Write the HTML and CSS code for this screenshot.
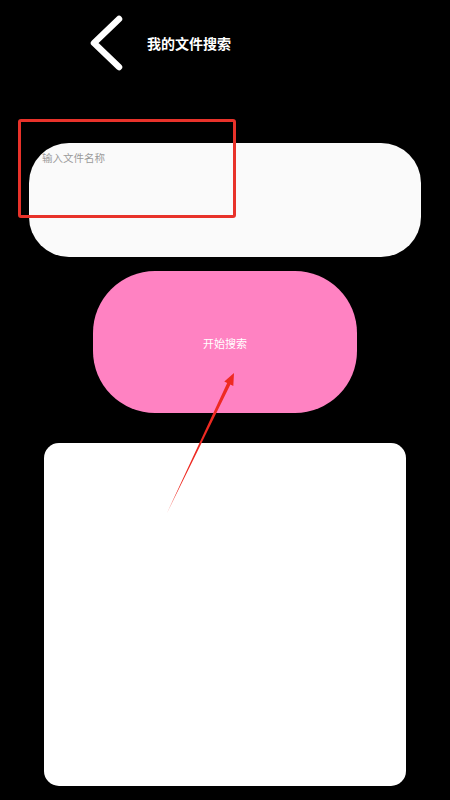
FILE: index.html
```html
<!DOCTYPE html>
<html lang="zh">
<head>
<meta charset="utf-8">
<title>我的文件搜索</title>
<link rel="stylesheet" href="styles.css">
</head>
<body>
<div class="page">
  <header class="header">
    <svg class="back" width="36" height="56" viewBox="0 0 36 56">
      <polyline points="31,4 6,28 31,52" fill="none" stroke="#fff" stroke-width="6.5" stroke-linecap="round" stroke-linejoin="round"/>
    </svg>
    <h1 class="title">我的文件搜索</h1>
  </header>
  <div class="input-box">
    <span class="placeholder">输入文件名称</span>
  </div>
  <button class="search-btn">开始搜索</button>
  <div class="result-card"></div>

  <div class="mark-box"></div>
  <svg class="mark-arrow" width="450" height="800" viewBox="0 0 450 800">
    <polygon points="167,513 227.2,383 224.3,381.6 234,373 233.3,386 230.4,384.6" fill="#ee2a22"/>
  </svg>
</div>
</body>
</html>
```

FILE: styles.css
```css
html, body {
  margin: 0;
  padding: 0;
  background: #000;
}
body {
  font-family: "Noto Sans CJK SC", "Noto Sans", sans-serif;
}
.page {
  position: relative;
  width: 450px;
  height: 800px;
  display: flex;
  flex-direction: column;
  overflow: hidden;
}
.header {
  display: flex;
  align-items: center;
  height: 86px;
  padding-left: 88px;
  box-sizing: border-box;
}
.back {
  display: block;
  flex: none;
}
.title {
  margin: 0 0 0 23px;
  font-size: 14px;
  font-weight: 700;
  color: #fff;
  line-height: 20px;
}
.input-box {
  margin: 57px 29px 0 29px;
  height: 114px;
  border-radius: 40px;
  background: #fafafa;
  padding: 6px 0 0 13px;
  box-sizing: border-box;
  line-height: 18px;
}
.placeholder {
  font-size: 10.5px;
  line-height: 18px;
  color: #9a9a9a;
  display: block;
}
.search-btn {
  margin: 14px 0 0 93px;
  width: 264px;
  height: 142px;
  border: none;
  border-radius: 62px;
  background: #ff82c2;
  color: #fff;
  font-family: "Noto Sans CJK SC", "Noto Sans", sans-serif;
  font-size: 11px;
  padding: 0;
  padding-top: 1px;
}
.result-card {
  margin: 30px 0 0 44px;
  width: 362px;
  height: 343px;
  border-radius: 15px;
  background: #fff;
}
.mark-box {
  position: absolute;
  left: 18px;
  top: 119px;
  width: 218px;
  height: 99px;
  border: 3px solid #e8322a;
  border-radius: 3px;
  box-sizing: border-box;
}
.mark-arrow {
  position: absolute;
  left: 0;
  top: 0;
  pointer-events: none;
}
```
